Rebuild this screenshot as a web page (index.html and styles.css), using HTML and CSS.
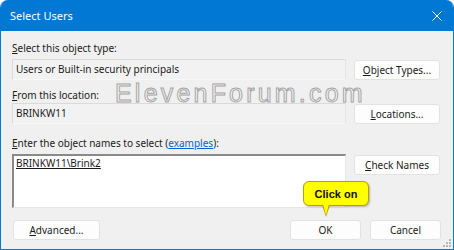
FILE: index.html
```html
<!DOCTYPE html>
<html>
<head>
<meta charset="utf-8">
<link rel="stylesheet" href="styles.css">
</head>
<body>
<div class="window">
  <div class="titlebar">
    <span class="title">Select Users</span>
    <svg class="close" width="12" height="12" viewBox="0 0 12 12"><path d="M1.5 1.5 L10.5 10.5 M10.5 1.5 L1.5 10.5" stroke="#ffffff" stroke-width="1" fill="none"/></svg>
  </div>
  <div class="content">
    <div class="label l1"><u>S</u>elect this object type:</div>
    <div class="row r1">
      <div class="field">Users or Built-in security principals</div>
      <div class="btn"><u>O</u>bject Types...</div>
    </div>

    <div class="label l2"><u>F</u>rom this location:</div>
    <div class="row r2">
      <div class="field">BRINKW11</div>
      <div class="btn b2"><u>L</u>ocations...</div>
    </div>

    <div class="label l3"><u>E</u>nter the object names to select (<span class="link">examples</span>):</div>
    <div class="row r3">
      <div class="names"><u>BRINKW11\Brink2</u></div>
      <div class="btn b3"><u>C</u>heck Names</div>
    </div>

    <div class="footer">
      <div class="btn adv"><u>A</u>dvanced...</div>
      <div class="spacer"></div>
      <div class="btn ok">OK</div>
      <div class="btn cancel">Cancel</div>
    </div>
  </div>
  <div class="watermark">ElevenForum.com</div>
  <div class="callout">Click on</div>
  <svg class="grip" width="10" height="10" viewBox="0 0 10 10">
    <rect x="7" y="1" width="2" height="2" fill="#b8b8b8"/>
    <rect x="4" y="4" width="2" height="2" fill="#b8b8b8"/>
    <rect x="7" y="4" width="2" height="2" fill="#b8b8b8"/>
    <rect x="1" y="7" width="2" height="2" fill="#b8b8b8"/>
    <rect x="4" y="7" width="2" height="2" fill="#b8b8b8"/>
    <rect x="7" y="7" width="2" height="2" fill="#b8b8b8"/>
  </svg>
</div>
</body>
</html>
```
FILE: styles.css
```css
* { box-sizing: border-box; }
html, body { margin: 0; padding: 0; background: #ffffff; }
body { width: 454px; height: 250px; overflow: hidden; font-family: "Noto Sans", "Liberation Sans", sans-serif; }

.window {
  position: relative;
  width: 454px;
  height: 250px;
  background: #f0f0f0;
  border: 1px solid #0078d4;
  border-top: none;
  border-radius: 8px 8px 0 0;
  overflow: hidden;
  display: flex;
  flex-direction: column;
}

.titlebar {
  height: 31px;
  background: #0078d4;
  display: flex;
  align-items: center;
  justify-content: space-between;
  padding: 0 10px 0 9px;
  color: #ffffff;
  flex: none;
}
.title { font-size: 11px; }

.content {
  display: flex;
  flex-direction: column;
  padding: 10px 12px 0 11px;
  font-size: 10px;
  color: #1b1b1b;
}

.label { height: 14px; line-height: 14px; white-space: nowrap; }
.l2 { margin-top: 8px; }
.l3 { margin-top: 12px; }

.row { display: flex; gap: 8px; align-items: flex-start; }
.r1 { margin-top: 4px; height: 21px; }
.r2 { margin-top: 1px; height: 21px; }
.r3 { margin-top: 4px; height: 54px; }

.field {
  width: 334px;
  height: 21px;
  background: #f2f2f2;
  border: 1px solid #dadada;
  border-bottom-color: #f8f8f8;
  border-right-color: #e4e4e4;
  padding: 0 3px;
  line-height: 19px;
  white-space: nowrap;
}

.btn {
  width: 86px;
  height: 20px;
  background: #fdfdfd;
  border: 1px solid #e2e2e2;
  border-radius: 3px;
  display: flex;
  align-items: center;
  justify-content: center;
  font-size: 10px;
  color: #1b1b1b;
  white-space: nowrap;
  flex: none;
}
.r1 .btn { margin-top: 1px; }
.b2 { margin-top: 1px; }
.b3 { margin-top: 1px; }

.names {
  width: 334px;
  height: 54px;
  background: #ffffff;
  border-top: 2px solid #8a8a8a;
  border-left: 2px solid #8a8a8a;
  border-right: 1px solid #e6e6e6;
  border-bottom: 1px solid #e6e6e6;
  padding: 1px 2px;
  line-height: 13px;
}

.link { color: #0066cc; text-decoration: underline; }

.footer {
  margin-top: 12px;
  display: flex;
  gap: 9px;
  padding-left: 1px;
}
.spacer { flex: 1; }
.adv { width: 87px; }
.ok { width: 71px; }
.cancel { width: 71px; }

.watermark {
  position: absolute;
  left: 114px;
  top: 79px;
  font-family: "Liberation Sans", Arial, sans-serif;
  font-size: 25px;
  letter-spacing: 3.2px;
  color: #f7f7f7;
  -webkit-text-stroke: 1px #a5a5a5;
  pointer-events: none;
  white-space: nowrap;
}

.callout {
  position: absolute;
  left: 302px;
  top: 181px;
  width: 66px;
  height: 25px;
  background: #ffff00;
  border: 1px solid #b8a200;
  border-radius: 6px;
  font-family: "Liberation Sans", Arial, sans-serif;
  font-weight: bold;
  font-size: 11px;
  color: #111111;
  display: flex;
  align-items: center;
  justify-content: center;
  box-shadow: 1px 1px 2px rgba(0,0,0,0.25);
}
.callout::after {
  content: "";
  position: absolute;
  left: 18px;
  bottom: -12px;
  width: 0;
  height: 0;
  border-left: 4px solid transparent;
  border-right: 4px solid transparent;
  border-top: 12px solid #b8a200;
}
.callout::before {
  content: "";
  position: absolute;
  left: 19px;
  bottom: -10px;
  width: 0;
  height: 0;
  border-left: 3px solid transparent;
  border-right: 3px solid transparent;
  border-top: 11px solid #ffff00;
  z-index: 1;
}

.grip {
  position: absolute;
  right: 1px;
  bottom: 1px;
}
```
